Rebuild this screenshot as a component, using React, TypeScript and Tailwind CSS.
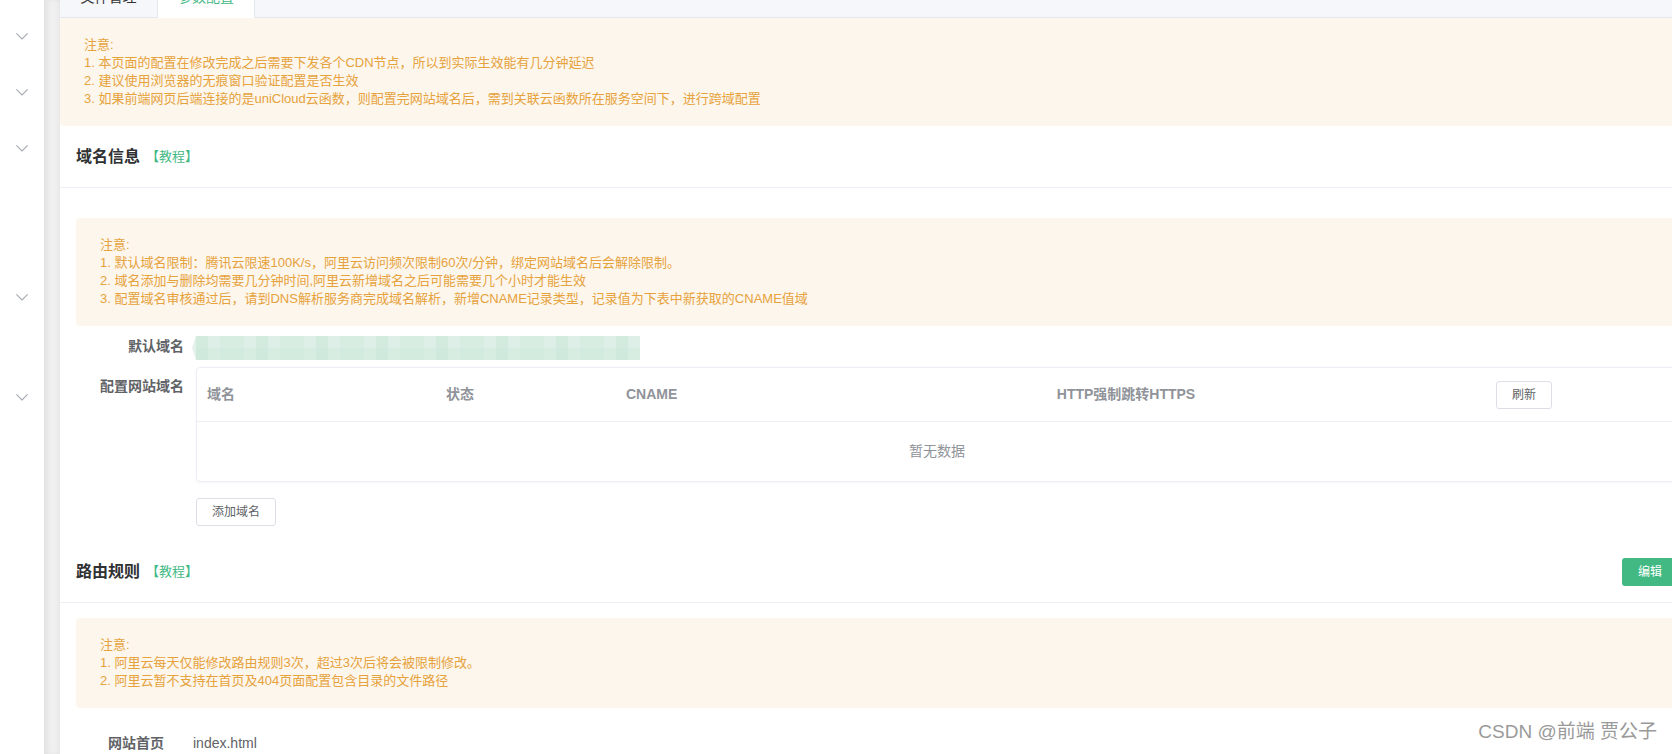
import type { ReactNode } from "react";

const FONT = "font-['Liberation_Sans','Noto_Sans_CJK_SC',sans-serif]";

function Chevron() {
  return (
    <svg width="12" height="7" viewBox="0 0 12 7" fill="none">
      <polyline
        points="0.7,0.7 6,6 11.3,0.7"
        stroke="#a9acb3"
        strokeWidth="1.1"
        strokeLinecap="round"
        strokeLinejoin="round"
      />
    </svg>
  );
}

function Notice({ lines }: { lines: string[] }) {
  return (
    <div className="rounded-[4px] bg-[#fdf6ec] py-[18px] pl-[24px] text-[13px] leading-[18px] text-[#e6a23c]">
      <div>注意:</div>
      {lines.map((l) => (
        <div key={l}>{l}</div>
      ))}
    </div>
  );
}

function SectionHead({ title, right }: { title: string; right?: ReactNode }) {
  return (
    <div className="flex h-[62px] items-center justify-between border-b border-[#ebeef5] px-[16px]">
      <div className="flex items-center">
        <span className="text-[16px] font-bold text-[#303133]">{title}</span>
        <span className="ml-[6px] text-[13px] text-[#42b983]">【教程】</span>
      </div>
      {right}
    </div>
  );
}

function FormItem({ label, children }: { label: string; children: ReactNode }) {
  return (
    <div className="flex">
      <div className="w-[120px] shrink-0 pr-[12px] text-right text-[14px] font-bold leading-[40px] text-[#606266]">
        {label}
      </div>
      <div className="min-w-0 flex-1">{children}</div>
    </div>
  );
}

function MiniButton({ children }: { children: ReactNode }) {
  return (
    <button className="h-[28px] rounded-[3px] border border-[#dcdfe6] bg-white px-[15px] text-[12px] text-[#606266]">
      {children}
    </button>
  );
}

/* blurred default domain, drawn as the mosaic it is in the picture */
function Mosaic() {
  const greens = ["#d3ebdf", "#ddefe6", "#e4f2eb", "#cfe9dc", "#d8ede2", "#e8f4ee", "#d6ece0"];
  const cells = [];
  for (let c = 0; c < 37; c++) {
    for (let r = 0; r < 2; r++) {
      const fill = greens[(c * 7 + r * 3 + ((c * c) % 5)) % greens.length];
      cells.push(<rect key={`${c}-${r}`} x={4 + c * 12} y={r * 12} width="12" height="12" fill={fill} />);
    }
  }
  return (
    <svg width="448" height="24" viewBox="0 0 448 24" className="-ml-[4px] block">
      <polygon points="4,0 0,12 4,24" fill="#e4f2eb" />
      {cells}
    </svg>
  );
}

export default function App() {
  return (
    <div className={`relative flex h-[754px] w-[1672px] overflow-hidden bg-white ${FONT}`}>
      {/* collapsed side menu */}
      <aside className="flex w-[45px] shrink-0 flex-col items-center border-r border-[#e3e3e3] bg-white pt-[8px]">
        <div className="flex h-[56px] items-center"><Chevron /></div>
        <div className="flex h-[56px] items-center"><Chevron /></div>
        <div className="flex h-[56px] items-center"><Chevron /></div>
        <div className="h-[93px]" />
        <div className="flex h-[56px] items-center"><Chevron /></div>
        <div className="h-[44px]" />
        <div className="flex h-[56px] items-center"><Chevron /></div>
      </aside>
      <div className="w-[15px] shrink-0 bg-[#f0f0f0] shadow-[inset_3px_0_4px_rgba(0,0,0,0.05)]" />

      <main className="-mt-[22px] w-[1634px] shrink-0 bg-white shadow-[-2px_0_4px_rgba(0,0,0,0.04)]">
        {/* tabs */}
        <div className="flex h-[40px] items-end border-b border-[#e4e7ed] bg-[#f5f7fa] text-[14px]">
          <div className="flex h-[39px] w-[98px] items-center justify-center border-r border-[#e4e7ed] text-[#303133]">
            文件管理
          </div>
          <div className="-mb-px flex h-[40px] w-[97px] items-center justify-center border-r border-[#e4e7ed] bg-white pb-px text-[#42b983]">
            参数配置
          </div>
        </div>

        <Notice
          lines={[
            "1. 本页面的配置在修改完成之后需要下发各个CDN节点，所以到实际生效能有几分钟延迟",
            "2. 建议使用浏览器的无痕窗口验证配置是否生效",
            "3. 如果前端网页后端连接的是uniCloud云函数，则配置完网站域名后，需到关联云函数所在服务空间下，进行跨域配置",
          ]}
        />

        <SectionHead title="域名信息" />
        <div className="px-[16px]">
          <div className="mt-[30px]">
            <Notice
              lines={[
                "1. 默认域名限制：腾讯云限速100K/s，阿里云访问频次限制60次/分钟，绑定网站域名后会解除限制。",
                "2. 域名添加与删除均需要几分钟时间,阿里云新增域名之后可能需要几个小时才能生效",
                "3. 配置域名审核通过后，请到DNS解析服务商完成域名解析，新增CNAME记录类型，记录值为下表中新获取的CNAME值域",
              ]}
            />
          </div>

          <FormItem label="默认域名">
            <div className="h-[40px] pt-[10px]">
              <Mosaic />
            </div>
          </FormItem>

          <FormItem label="配置网站域名">
            <div className="mt-px overflow-hidden rounded-[4px] border border-[#ebeef5] shadow-[0_1px_3px_rgba(0,0,0,0.04)]">
              <div className="grid h-[54px] grid-cols-[239px_180px_150px_720px_1fr] items-center border-b border-[#ebeef5] text-[14px] font-bold text-[#909399]">
                <div className="pl-[10px]">域名</div>
                <div className="pl-[10px]">状态</div>
                <div className="pl-[10px]">CNAME</div>
                <div className="text-center">HTTP强制跳转HTTPS</div>
                <div className="pl-[10px] font-normal">
                  <MiniButton>刷新</MiniButton>
                </div>
              </div>
              <div className="flex h-[59px] items-center justify-center text-[14px] text-[#909399]">
                暂无数据
              </div>
            </div>
            <div className="mt-[16px]">
              <MiniButton>添加域名</MiniButton>
            </div>
          </FormItem>
        </div>

        <div className="mt-[15px]">
          <SectionHead
            title="路由规则"
            right={
              <button className="h-[28px] rounded-[3px] bg-[#42b983] px-[16px] text-[12px] text-white">
                编辑
              </button>
            }
          />
        </div>
        <div className="px-[16px]">
          <div className="mt-[15px]">
            <Notice
              lines={[
                "1. 阿里云每天仅能修改路由规则3次，超过3次后将会被限制修改。",
                "2. 阿里云暂不支持在首页及404页面配置包含目录的文件路径",
              ]}
            />
          </div>
          <div className="mt-[15px] flex h-[40px] items-center text-[14px] text-[#606266]">
            <div className="w-[117px] shrink-0 pl-[32px] font-bold">网站首页</div>
            <div>index.html</div>
          </div>
        </div>
      </main>

      {/* watermark */}
      <div className="pointer-events-none absolute bottom-[8px] right-[15px] text-[19px] text-[#9a9a9a] [text-shadow:1px_1px_0_rgba(255,255,255,0.8)]">
        CSDN @前端 贾公子
      </div>
    </div>
  );
}
